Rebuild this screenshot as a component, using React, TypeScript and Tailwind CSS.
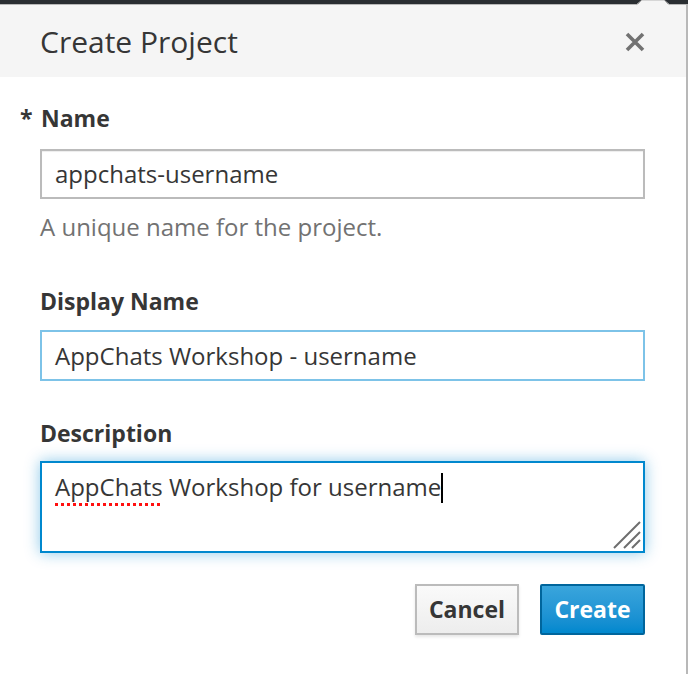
import React from "react";

export default function App() {
  return (
    <div className="relative w-[688px] h-[674px] overflow-hidden bg-white font-['Open_Sans',sans-serif] text-[#363636]">
      {/* top dark strip */}
      <div className="h-[4px] bg-[#2a2e32]" />
      {/* popover arrow notch */}
      <svg className="absolute left-[636px] top-0" width="34" height="6" viewBox="0 0 34 6">
        <polygon points="0,6 6,0 28,0 34,6" fill="#f5f5f5" />
        <polyline points="0,5 6,0 28,0 34,5" fill="none" stroke="#b8b8b8" strokeWidth="1" />
      </svg>
      <div className="flex flex-col h-[670px] border-t border-r-2 border-[#b8b8b8]">
        {/* header */}
        <div className="flex items-center justify-between h-[72px] bg-[#f5f5f5] pl-[40px] pr-[41px]">
          <h1 className="text-[30px] leading-[40px] font-normal text-[#363636] mt-[2px]">Create Project</h1>
          <svg width="20" height="20" viewBox="0 0 20 20" className="mt-[1px]">
            <path d="M2 2 L18 18 M18 2 L2 18" stroke="#727272" strokeWidth="3.6" strokeLinecap="butt" />
          </svg>
        </div>

        {/* body */}
        <div className="flex flex-col pl-[40px] pr-[41px] pt-[25px] text-[24px]">
          <label className="-ml-[20px] font-bold text-[23px] leading-[32px] text-[#363636]">
            <span className="inline-block w-[21px]">*</span>Name
          </label>
          <div className="mt-[15px] h-[50px] flex items-center border-2 border-[#bbbbbb] shadow-[inset_0_1px_1px_rgba(3,3,3,0.075)] px-[13px] leading-[32px]">
            appchats-username
          </div>
          <div className="mt-[12px] leading-[32px] text-[#727272]">A unique name for the project.</div>

          <label className="mt-[42px] font-bold text-[23px] leading-[32px]">Display Name</label>
          <div className="mt-[13px] h-[51px] flex items-center border-2 border-[#7dc3e8] px-[13px] leading-[32px]">
            AppChats Workshop - username
          </div>

          <label className="mt-[36px] font-bold text-[23px] leading-[32px]">Description</label>
          <div className="relative mt-[12px] h-[92px] border-2 border-[#0088ce] shadow-[0_0_14px_rgba(0,136,206,0.45)] px-[13px] pt-[8px] leading-[32px]">
            <span className="underline decoration-dotted decoration-[#ff1010] decoration-[3px] underline-offset-[7px]">AppChats</span>{" "}
            Workshop for username
            <span className="inline-block w-[2px] h-[30px] bg-black align-middle -mt-[4px]" />
            <svg className="absolute right-[2px] bottom-[2px]" width="28" height="28" viewBox="0 0 28 28">
              <path d="M1 27 L27 1 M11 27 L27 11 M19 27 L27 19" stroke="#6e6e6e" strokeWidth="2" />
            </svg>
          </div>

          <div className="mt-[31px] flex justify-end gap-[21px]">
            <button className="h-[51px] w-[104px] border-2 border-[#bbbbbb] bg-gradient-to-b from-[#fafafa] to-[#ededed] font-bold text-[#363636] text-[23px] shadow-[0_2px_3px_rgba(3,3,3,0.1)]">
              Cancel
            </button>
            <button className="h-[51px] w-[105px] border-2 border-[#00659c] rounded-[2px] bg-gradient-to-b from-[#39a5dc] to-[#0088ce] font-bold text-white text-[23px]">
              Create
            </button>
          </div>
        </div>
      </div>
    </div>
  );
}
